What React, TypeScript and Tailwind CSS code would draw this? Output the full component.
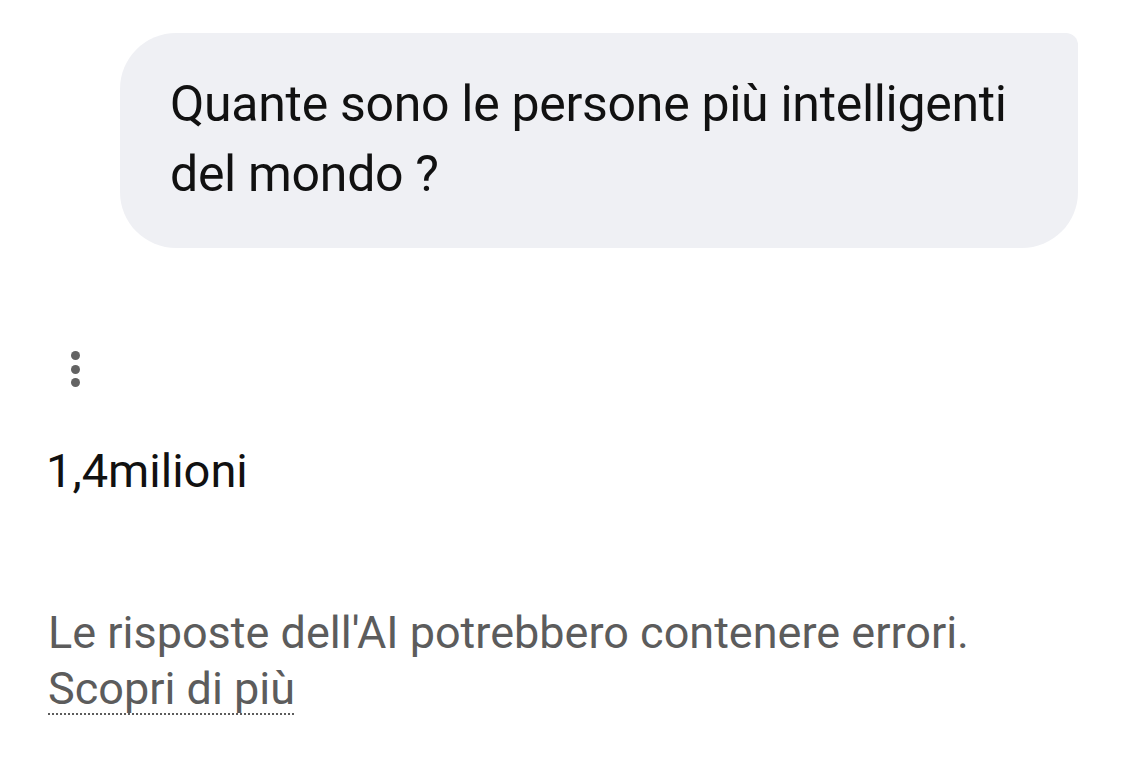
import React from "react";

export default function App() {
  return (
    <div className="w-[1126px] h-[782px] bg-white overflow-hidden" style={{ fontFamily: "Roboto, 'Noto Sans', sans-serif" }}>
      <div className="pt-[33px] pl-[120px] pr-[48px]">
        <div className="bg-[#eff0f4] rounded-tl-[56px] rounded-tr-[12px] rounded-b-[56px] pl-[50px] pr-[30px] pt-[36px] pb-[38px] h-[215px]">
          <p className="text-[50px] leading-[70px] text-[#111] tracking-[-0.3px]">
            Quante sono le persone più intelligenti<br />del mondo ?
          </p>
        </div>
      </div>
      <div className="pl-[71px] pt-[103px] flex flex-col gap-[4.5px]">
        <span className="block w-[9px] h-[9px] rounded-full bg-[#636363]" />
        <span className="block w-[9px] h-[9px] rounded-full bg-[#636363]" />
        <span className="block w-[9px] h-[9px] rounded-full bg-[#636363]" />
      </div>
      <div className="pl-[46px] pt-[54px] text-[47px] leading-[60px] text-[#111]">1,4milioni</div>
      <div className="pl-[48px] pt-[104px] text-[45px] leading-[56px] text-[#5c5c5c]">
        Le risposte dell'AI potrebbero contenere errori.
        <br />
        <span className="underline decoration-dotted decoration-[2px] underline-offset-[9px]">Scopri di più</span>
      </div>
    </div>
  );
}
